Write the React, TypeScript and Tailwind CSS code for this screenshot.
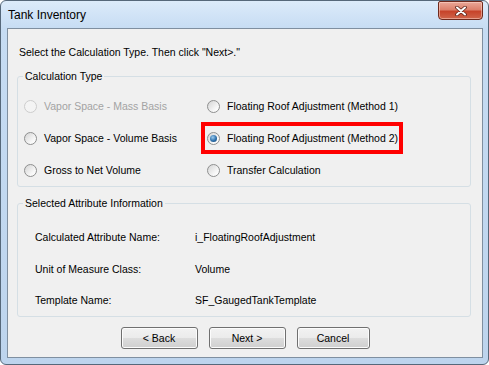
import React from "react";

function Radio({ checked, disabled }: { checked?: boolean; disabled?: boolean }) {
  return (
    <span
      className={`flex h-[13px] w-[13px] shrink-0 items-center justify-center rounded-full border ${
        disabled
          ? "border-[#cdcdcd] bg-[#f4f4f4]"
          : "border-[#8e8f8f] bg-[linear-gradient(135deg,#d4d4d4,#f8f8f8_70%,#ffffff)]"
      }`}
    >
      {checked && (
        <span className="h-[7px] w-[7px] rounded-full bg-[radial-gradient(circle_at_40%_35%,#9ccbee,#2d6fab_55%,#0f3e6d)]" />
      )}
    </span>
  );
}

function Option({
  label,
  checked,
  disabled,
  right,
  highlight,
}: {
  label: string;
  checked?: boolean;
  disabled?: boolean;
  right?: boolean;
  highlight?: boolean;
}) {
  return (
    <div
      className={`flex h-[32px] items-center gap-[7px] whitespace-nowrap ${
        right ? `w-[202px] border-4 pl-[2px] ${highlight ? "border-[#ff0000]" : "border-transparent"}` : "pl-[6px]"
      }`}
    >
      <Radio checked={checked} disabled={disabled} />
      <span className={disabled ? "text-[#a3a3a3]" : "text-black"}>{label}</span>
    </div>
  );
}

function Button({ label, w }: { label: string; w: string }) {
  return (
    <div
      className={`${w} flex h-[22px] items-center justify-center rounded-[3px] border border-[#707070] bg-[linear-gradient(to_bottom,#f2f2f2_0%,#ebebeb_50%,#dddddd_51%,#cfcfcf_100%)] shadow-[inset_0_0_0_1px_#fcfcfc] text-black`}
    >
      {label}
    </div>
  );
}

export default function App() {
  return (
    <div
      className="flex h-[365px] w-[489px] flex-col rounded-[6px] border border-[#56687a] bg-[linear-gradient(to_bottom,#dcebfa,#c6dcf3_28px,#bdd4ed)] text-[10.5px] leading-[13px]"
      style={{ fontFamily: '"Liberation Sans", Arial, sans-serif' }}
    >
      {/* Title bar */}
      <div className="flex h-[27px] shrink-0 items-start justify-between pl-[7px] pr-[5px]">
        <span className="mt-[7px] text-[12px] leading-[15px] text-black">Tank Inventory</span>
        <div className="flex h-[19px] w-[45px] items-center justify-center rounded-b-[4px] rounded-t-[2px] border border-[#6f2a1d] bg-[linear-gradient(to_bottom,#eaa898_0%,#dc806b_45%,#c7432a_55%,#d0654a_100%)] shadow-[inset_0_0_0_1px_rgba(255,220,210,0.5)]">
          <svg width="12" height="10" viewBox="0 0 12 10">
            <path d="M2 1.5 L10 8.5 M10 1.5 L2 8.5" stroke="#5b241a" strokeWidth="3.6" strokeLinecap="round" />
            <path d="M2 1.5 L10 8.5 M10 1.5 L2 8.5" stroke="#ffffff" strokeWidth="2" strokeLinecap="round" />
          </svg>
        </div>
      </div>

      {/* Client */}
      <div className="ml-[6px] mr-[5px] flex h-[330px] flex-col border border-[#7f8fa0] bg-[#f0f0f0]">
        <div className="h-[41px] shrink-0 pl-[11px] pt-[17px] text-black">
          Select the Calculation Type. Then click "Next&gt;."
        </div>

        <fieldset className="ml-[9px] mr-[11px] rounded-[3px] border border-[#d5dfe5] pt-[7px]">
          <legend className="ml-[5px] px-[2px] text-black">Calculation Type</legend>
          <div className="grid grid-cols-[183px_1fr]">
            <Option label="Vapor Space - Mass Basis" disabled />
            <Option label="Floating Roof Adjustment (Method 1)" right />
            <Option label="Vapor Space - Volume Basis" />
            <Option label="Floating Roof Adjustment (Method 2)" right checked highlight />
            <Option label="Gross to Net Volume" />
            <Option label="Transfer Calculation" right />
          </div>
        </fieldset>

        <fieldset className="ml-[9px] mr-[11px] mt-[10px] rounded-[3px] border border-[#d5dfe5] pt-[11px]">
          <legend className="ml-[5px] px-[2px] text-black">Selected Attribute Information</legend>
          <div className="flex flex-col pl-[17px] text-black">
            <div className="flex h-[32px] items-center">
              <span className="w-[160px]">Calculated Attribute Name:</span>
              <span>i_FloatingRoofAdjustment</span>
            </div>
            <div className="flex h-[32px] items-center">
              <span className="w-[160px]">Unit of Measure Class:</span>
              <span>Volume</span>
            </div>
            <div className="flex h-[31px] items-center">
              <span className="w-[160px]">Template Name:</span>
              <span>SF_GaugedTankTemplate</span>
            </div>
          </div>
        </fieldset>

        <div className="mt-[10px] flex justify-center gap-[11px]">
          <Button label="< Back" w="w-[77px]" />
          <Button label="Next >" w="w-[77px]" />
          <Button label="Cancel" w="w-[73px]" />
        </div>
      </div>
    </div>
  );
}
